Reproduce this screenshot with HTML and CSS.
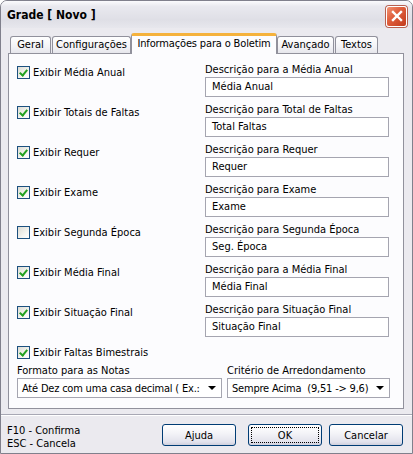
FILE: index.html
```html
<!DOCTYPE html>
<html>
<head>
<meta charset="utf-8">
<link rel="stylesheet" href="styles.css">
</head>
<body>
<div class="window">
  <div class="titlebar">
    <span class="title">Grade [ Novo ]</span>
    <span class="close"><svg width="12" height="12" viewBox="0 0 12 12"><path d="M2 2 L10 10 M10 2 L2 10" stroke="#fff" stroke-width="2.4" stroke-linecap="square"/></svg></span>
  </div>
  <div class="client">
    <div class="tabs">
      <div class="tab t1">Geral</div>
      <div class="tab t2">Configurações</div>
      <div class="tab active t3">Informações para o Boletim</div>
      <div class="tab t4">Avançado</div>
      <div class="tab t5">Textos</div>
    </div>
    <div class="panel">
      <div class="grid">
        <label class="chk"><span class="box on"></span>Exibir Média Anual</label>
        <div class="field"><div class="lbl">Descrição para a Média Anual</div><div class="input">Média Anual</div></div>

        <label class="chk"><span class="box on"></span>Exibir Totais de Faltas</label>
        <div class="field"><div class="lbl">Descrição para Total de Faltas</div><div class="input">Total Faltas</div></div>

        <label class="chk"><span class="box on"></span>Exibir Requer</label>
        <div class="field"><div class="lbl">Descrição para Requer</div><div class="input">Requer</div></div>

        <label class="chk"><span class="box on"></span>Exibir Exame</label>
        <div class="field"><div class="lbl">Descrição para Exame</div><div class="input">Exame</div></div>

        <label class="chk"><span class="box"></span>Exibir Segunda Época</label>
        <div class="field"><div class="lbl">Descrição para Segunda Época</div><div class="input">Seg. Época</div></div>

        <label class="chk"><span class="box on"></span>Exibir Média Final</label>
        <div class="field"><div class="lbl">Descrição para a Média Final</div><div class="input">Média Final</div></div>

        <label class="chk"><span class="box on"></span>Exibir Situação Final</label>
        <div class="field"><div class="lbl">Descrição para Situação Final</div><div class="input">Situação Final</div></div>
      </div>
      <label class="chk single"><span class="box on"></span>Exibir Faltas Bimestrais</label>
      <div class="selects">
        <div class="sfield s1"><div class="lbl">Formato para as Notas</div><div class="select"><span class="stext">Até Dez com uma casa decimal ( Ex.:</span><span class="arrow"></span></div></div>
        <div class="sfield s2"><div class="lbl">Critério de Arredondamento</div><div class="select"><span class="stext">Sempre Acima&nbsp; (9,51 -&gt; 9,6)</span><span class="arrow"></span></div></div>
      </div>
    </div>
    <div class="sep"></div>
    <div class="footer">
      <div class="keys"><div>F10 - Confirma</div><div>ESC - Cancela</div></div>
      <div class="buttons">
        <div class="btn">Ajuda</div>
        <div class="btn default"><span class="focus">OK</span></div>
        <div class="btn last">Cancelar</div>
      </div>
    </div>
  </div>
</div>
</body>
</html>
```

FILE: styles.css
```css
body {
  margin: 0;
  font-family: "DejaVu Sans Condensed", "DejaVu Sans", sans-serif;
  font-stretch: condensed;
  font-size: 11px;
  color: #000;
}
.window {
  width: 413px;
  height: 454px;
  box-sizing: border-box;
  background: #ebeaef;
  border: 1px solid #80808c;
  border-radius: 7px 7px 0 0;
  overflow: hidden;
  display: flex;
  flex-direction: column;
}
.titlebar {
  height: 27px;
  flex: none;
  display: flex;
  align-items: center;
  justify-content: space-between;
  padding: 0 5px 0 6px;
  background: linear-gradient(#fbfbfd 0, #e9e9ef 20%, #dfdfe6 70%, #e7e7ed 100%);
}
.title {
  font-weight: bold;
  font-size: 12px;
  font-stretch: normal;
  padding-top: 1px;
}
.close {
  width: 21px;
  height: 21px;
  box-sizing: border-box;
  border: 1px solid #fff;
  border-radius: 3px;
  background: linear-gradient(135deg, #f29474 0, #e0603e 40%, #c23a1c 100%);
  display: flex;
  align-items: center;
  justify-content: center;
  margin-top: 3px;
  box-shadow: 0 0 0 1px #b86050;
}
.client {
  flex: 1;
  display: flex;
  flex-direction: column;
  padding: 5px 5px 0 7px;
}
.tabs {
  display: flex;
  align-items: flex-end;
  height: 20px;
  margin-left: 2px;
  position: relative;
  z-index: 1;
}
.tab {
  height: 17px;
  box-sizing: border-box;
  border: 1px solid #91919c;
  border-bottom: none;
  border-radius: 3px 3px 0 0;
  background: linear-gradient(#ffffff, #f3f3f6 60%, #e6e6ec);
  text-align: center;
  line-height: 16px;
  margin-right: 1px;
}
.t1 { width: 41px; }
.t2 { width: 79px; }
.t3 { width: 146px; }
.t4 { width: 57px; }
.t5 { width: 43px; }
.tab.active {
  height: 21px;
  margin-bottom: -1px;
  background: #fcfcfe;
  border-top: 3px solid #f5b23c;
  border-radius: 3px 3px 0 0;
  line-height: 16px;
  margin-left: -1px;
  margin-right: 0;
  letter-spacing: -0.15px;
}
.panel {
  width: 396px;
  height: 356px;
  box-sizing: border-box;
  border: 1px solid #91919c;
  background: #fcfcfe;
  padding: 9px 0 0 8px;
}
.grid {
  display: grid;
  grid-template-columns: 188px 184px;
  row-gap: 6px;
}
.chk {
  display: flex;
  align-items: center;
  height: 15px;
  margin-top: 2px;
  gap: 3px;
  white-space: nowrap;
}
.box {
  width: 13px;
  height: 13px;
  box-sizing: border-box;
  border: 1px solid #1c5180;
  background: linear-gradient(135deg, #dcdcd4 0, #f4f4f0 60%, #ffffff 100%);
  flex: none;
  position: relative;
}
.box.on::after {
  content: "";
  position: absolute;
  left: 3px;
  top: 1px;
  width: 3px;
  height: 6px;
  border: solid #21a121;
  border-width: 0 2px 2px 0;
  transform: rotate(40deg);
}
.field .lbl, .sfield .lbl {
  height: 14px;
  line-height: 14px;
  white-space: nowrap;
}
.input {
  height: 20px;
  box-sizing: border-box;
  border: 1px solid #a5a5b0;
  background: #fff;
  padding-left: 6px;
  line-height: 18px;
}
.single {
  margin-top: 8px;
}
.selects {
  display: flex;
  gap: 5px;
  margin-top: 4px;
}
.s1 { width: 205px; }
.s2 { width: 163px; }
.select {
  height: 20px;
  box-sizing: border-box;
  border: 1px solid #a5a5b0;
  background: #fff;
  display: flex;
  align-items: center;
  padding: 0 5px 0 4px;
}
.stext {
  flex: 1;
  min-width: 0;
  white-space: nowrap;
  letter-spacing: -0.2px;
}
.arrow {
  flex: none;
  width: 0;
  height: 0;
  border-left: 4px solid transparent;
  border-right: 4px solid transparent;
  border-top: 4px solid #000;
  margin-left: 2px;
}
.sep {
  height: 0;
  border-top: 1px solid #a8a8b4;
  border-bottom: 1px solid #fff;
  margin: 5px -5px 0 -7px;
}
.footer {
  display: flex;
  justify-content: space-between;
  padding-top: 8px;
}
.keys {
  line-height: 13px;
  margin-left: -1px;
}
.buttons {
  display: flex;
  margin-right: 4px;
}
.btn {
  width: 74px;
  height: 22px;
  box-sizing: border-box;
  border: 1px solid #003c74;
  border-radius: 3px;
  background: linear-gradient(#ffffff 0, #f4f4f8 40%, #e2e2ec 85%, #cfcfdc 100%);
  display: flex;
  align-items: center;
  justify-content: center;
  margin-left: 12px;
}
.btn.last {
  margin-left: 7px;
}
.focus {
  width: 68px;
  height: 16px;
  box-sizing: border-box;
  border: 1px dotted #000;
  display: flex;
  align-items: center;
  justify-content: center;
}
```
